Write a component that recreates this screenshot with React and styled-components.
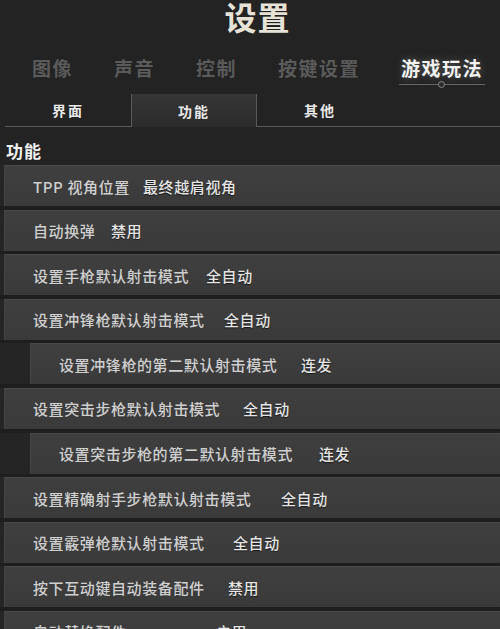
import React from 'react';
import styled, { createGlobalStyle } from 'styled-components';

const GlobalStyle = createGlobalStyle`
  html, body {
    margin: 0;
    padding: 0;
    background: #232323;
    font-family: "Noto Sans CJK SC", "Noto Sans", sans-serif;
    overflow: hidden;
  }
`;

const Page = styled.div`
  width: 500px;
  height: 629px;
  background: #232323;
  overflow: hidden;
`;

const Title = styled.h1`
  margin: 0;
  height: 38px;
  padding-left: 15px;
  box-sizing: border-box;
  text-align: center;
  font-size: 32px;
  line-height: 32px;
  font-weight: 700;
  letter-spacing: 1px;
  color: #e6e2d8;
`;

const MainTabs = styled.div`
  display: flex;
  gap: 41px;
  padding: 18px 0 0 32px;
  height: 56px;
  box-sizing: border-box;
`;

const MainTab = styled.div`
  position: relative;
  font-size: 19px;
  line-height: 24px;
  font-weight: 700;
  letter-spacing: 1.5px;
  color: ${p => (p.$active ? '#f2f2f2' : '#5a5a5a')};
  text-shadow: ${p => (p.$active ? '0 0 8px rgba(255,255,255,0.25)' : 'none')};
`;

const Underline = styled.div`
  position: absolute;
  left: -2px;
  right: -2px;
  top: 28px;
  height: 1px;
  background: #666;

  &::after {
    content: '';
    position: absolute;
    left: 50%;
    top: -3px;
    width: 5px;
    height: 5px;
    margin-left: -4px;
    border: 1px solid #888;
    border-radius: 50%;
    background: #2a2a2a;
  }
`;

const SubTabs = styled.div`
  display: flex;
  margin-left: 5px;
  height: 33px;
  box-sizing: border-box;
`;

const SubTab = styled.div`
  width: 126px;
  display: flex;
  align-items: center;
  justify-content: center;
  font-size: 14px;
  font-weight: 700;
  letter-spacing: 2px;
  color: #e8e8e8;
  box-sizing: border-box;
  border-bottom: ${p => (p.$active ? 'none' : '1px solid #5a5a5a')};
  border-left: ${p => (p.$active ? '1px solid #5a5a5a' : 'none')};
  border-right: ${p => (p.$active ? '1px solid #5a5a5a' : 'none')};
  background: ${p => (p.$active ? 'linear-gradient(#363636, #2b2b2b)' : 'transparent')};
`;

const SubFill = styled.div`
  flex: 1;
  border-bottom: 1px solid #5a5a5a;
`;

const Heading = styled.h2`
  margin: 0;
  padding: 13px 0 0 6px;
  height: 38px;
  box-sizing: border-box;
  font-size: 17px;
  line-height: 22px;
  font-weight: 700;
  letter-spacing: 1px;
  color: #f0f0f0;
`;

const List = styled.div`
  display: flex;
  flex-direction: column;
  gap: 3.6px;
  background: #1e1e1e;
`;

const RowWrap = styled.div`
  background: #252525;
  padding-left: ${p => (p.$sub ? '30px' : '4px')};
`;

const Row = styled.div`
  height: 41px;
  box-sizing: border-box;
  display: flex;
  align-items: center;
  padding-left: 28px;
  background: linear-gradient(#3f3f3f, #3a3a3a);
  border-top: 1px solid #4a4a4a;
  border-left: 1px solid #444;
  font-size: 15px;
  font-weight: 500;
  letter-spacing: 0.6px;
`;

const Label = styled.span`
  width: ${p => p.$w}px;
  flex-shrink: 0;
  white-space: nowrap;
  color: #cfcfcf;
`;

const Value = styled.span`
  white-space: nowrap;
  color: #e4e4e4;
  text-shadow: 0 1px 1px rgba(0,0,0,0.6);
`;

const tabs = ['图像', '声音', '控制', '按键设置', '游戏玩法'];

const rows = [
  { label: 'TPP 视角位置', value: '最终越肩视角', x: 142 },
  { label: '自动换弹', value: '禁用', x: 110 },
  { label: '设置手枪默认射击模式', value: '全自动', x: 205 },
  { label: '设置冲锋枪默认射击模式', value: '全自动', x: 223 },
  { label: '设置冲锋枪的第二默认射击模式', value: '连发', x: 300, sub: true },
  { label: '设置突击步枪默认射击模式', value: '全自动', x: 242 },
  { label: '设置突击步枪的第二默认射击模式', value: '连发', x: 318, sub: true },
  { label: '设置精确射手步枪默认射击模式', value: '全自动', x: 280 },
  { label: '设置霰弹枪默认射击模式', value: '全自动', x: 232 },
  { label: '按下互动键自动装备配件', value: '禁用', x: 227 },
  { label: '自动替换配件', value: '启用', x: 215 },
];

const App = () => {
  return (
    <Page>
      <GlobalStyle />
      <Title>设置</Title>
      <MainTabs>
        {tabs.map((t, i) => (
          <MainTab key={t} $active={i === tabs.length - 1}>
            {t}
            {i === tabs.length - 1 && <Underline />}
          </MainTab>
        ))}
      </MainTabs>
      <SubTabs>
        <SubTab>界面</SubTab>
        <SubTab $active>功能</SubTab>
        <SubTab>其他</SubTab>
        <SubFill />
      </SubTabs>
      <Heading>功能</Heading>
      <List>
        {rows.map(r => {
          const start = r.sub ? 58 : 32;
          return (
            <RowWrap key={r.label} $sub={r.sub}>
              <Row>
                <Label $w={r.x - start}>{r.label}</Label>
                <Value>{r.value}</Value>
              </Row>
            </RowWrap>
          );
        })}
      </List>
    </Page>
  );
};

export default App;
